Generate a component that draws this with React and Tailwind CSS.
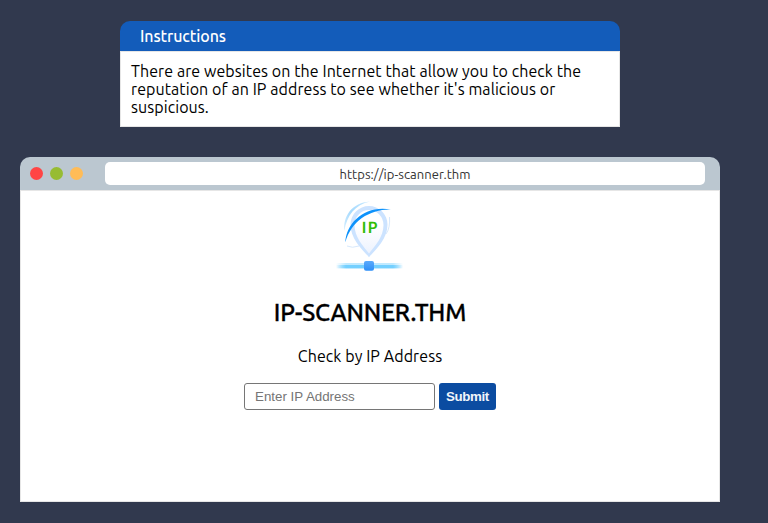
function IpLogo() {
  return (
    <svg className="block h-[76px] w-[76px]" viewBox="332 197 76 76" fill="none">
      <defs>
        <linearGradient id="pinInner" x1="0" y1="0" x2="0" y2="1">
          <stop offset="0.35" stopColor="#ffffff" />
          <stop offset="1" stopColor="#edf2fe" />
        </linearGradient>
        <linearGradient id="bar" x1="336" y1="0" x2="403" y2="0" gradientUnits="userSpaceOnUse">
          <stop offset="0" stopColor="#74d0ff" stopOpacity="0" />
          <stop offset="0.15" stopColor="#74d0ff" />
          <stop offset="0.85" stopColor="#74d0ff" />
          <stop offset="1" stopColor="#74d0ff" stopOpacity="0" />
        </linearGradient>
        <linearGradient id="arc" x1="344" y1="232" x2="370" y2="201" gradientUnits="userSpaceOnUse">
          <stop offset="0" stopColor="#a5dafe" stopOpacity="0.4" />
          <stop offset="0.5" stopColor="#a5dafe" />
          <stop offset="1" stopColor="#a5dafe" stopOpacity="0.6" />
        </linearGradient>
        <linearGradient id="node" x1="0" y1="0" x2="0" y2="1">
          <stop offset="0" stopColor="#5aaafc" />
          <stop offset="1" stopColor="#2f90f7" />
        </linearGradient>
      </defs>
      <path d="M344.300 231C343 217 351 203 370 201.500C355 205 347 215 344.300 231Z" fill="url(#arc)" />
      <path d="M347 246Q352 248.500 359 246M389.500 217C390 224 389 230 386 234" stroke="#d8e9fc" strokeWidth="1" />
      <path d="M369 257.200C362 249 350.500 239 350.500 224.500A18.500 18.500 0 0 1 387.500 224.500C387.500 239 376 249 369 257.200Z" fill="#cce3ff" />
      <path d="M369 253.500C363 246 354.500 237 354.500 225A14.500 15 0 0 1 383.500 225C383.500 237 375 246 369 253.500Z" fill="url(#pinInner)" />
      <path d="M345.300 242.500C346 222 366 204.500 391 209.500C370 209 351 221 345.300 242.500Z" fill="#0d92fb" />
      <text y="232.500" fill="#30bd06" fontSize="15.500" fontWeight="700" fontFamily="Lato, sans-serif" textRendering="geometricPrecision">
        <tspan x="361.800">I</tspan>
        <tspan x="367.800">P</tspan>
      </text>
      <rect x="336" y="263" width="67" height="6" fill="url(#bar)" opacity="0.450" />
      <rect x="336" y="265" width="67" height="3" fill="url(#bar)" />
      <rect x="364" y="261" width="10" height="9.700" rx="2" fill="url(#node)" />
    </svg>
  );
}

export default function App() {
  return (
    <main className="flex h-[523px] w-[768px] flex-col overflow-hidden bg-[#31394e] font-['Ubuntu','Noto_Sans',sans-serif] text-black">
      <section className="mt-[21px] ml-[120px] h-[106px] w-[500px]">
        <h2 className="h-[30px] rounded-t-[10px] bg-[#135cba] pl-5 text-base leading-[31px] font-medium tracking-[-0.1px] text-white">
          Instructions
        </h2>
        <p className="h-[76px] border border-[#e6e6e6] bg-white px-[10px] pt-[10px] text-base leading-[18px] tracking-[0.08px]">
          There are websites on the Internet that allow you to check the reputation of an IP address to see whether it's malicious or suspicious.
        </p>
      </section>
      <section className="mt-[30px] ml-5 flex h-[345px] w-[700px] flex-col">
        <header className="flex h-[33px] shrink-0 items-center rounded-t-[10px] bg-[#bbc7d0] pl-[10px]">
          <div className="flex gap-[7px]">
            <i className="size-[13px] rounded-full bg-[#ff4545]" />
            <i className="size-[13px] rounded-full bg-[#97bc32]" />
            <i className="size-[13px] rounded-full bg-[#ffbc57]" />
          </div>
          <div className="ml-[22px] h-[23px] w-[600px] rounded-[5px] bg-white text-center text-[13px] leading-[25px] tracking-[0.06px] text-[#333]">
            https://ip-scanner.thm
          </div>
        </header>
        <div className="flex flex-1 flex-col items-center border border-[#e6e6e6] bg-white pt-[6px]">
          <IpLogo />
          <h1 className="mt-[24px] text-2xl leading-[32px] font-medium tracking-[-0.13px] [-webkit-text-stroke:0.3px_black]">IP-SCANNER.THM</h1>
          <p className="mt-[17px] text-base leading-[20px] tracking-[0.08px]">Check by IP Address</p>
          <form className="mt-[17px] flex gap-1 font-['Liberation_Sans',Arial,sans-serif] text-[13.333px]">
            <input className="h-[27px] w-[191px] rounded-[3px] border border-[#767676] px-[10px] placeholder:text-[#757575]" placeholder="Enter IP Address" />
            <button type="button" className="h-[27px] w-[57px] rounded-[3px] bg-[#0b4ca1] text-[13.333px] font-bold tracking-[-0.4px] text-[#f1f5fa]">Submit</button>
          </form>
        </div>
      </section>
    </main>
  );
}
